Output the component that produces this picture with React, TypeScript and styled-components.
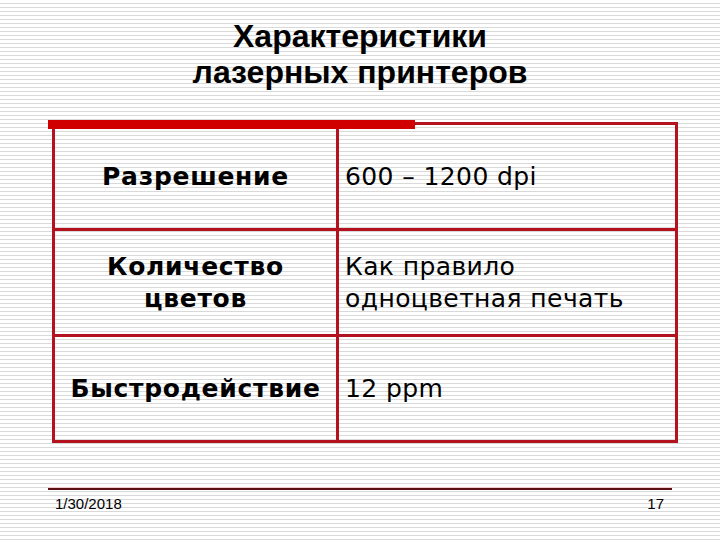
import * as React from "react";
import styled, { createGlobalStyle } from "styled-components";

const colors = {
  border: "#b3121e",
  bar: "#d00000",
  footerLine: "#5a1010",
  text: "#000000"
};

const GlobalStyle = createGlobalStyle`
  html, body {
    margin: 0;
    padding: 0;
  }
  body {
    font-family: "DejaVu Sans", Verdana, sans-serif;
    color: ${colors.text};
  }
`;

const SSlide = styled.div`
  position: relative;
  width: 720px;
  height: 540px;
  overflow: hidden;
  display: flex;
  flex-direction: column;
  background-color: #ffffff;
  background-image: repeating-linear-gradient(
    to bottom,
    #ffffff 0px,
    #ffffff 3px,
    #d9d9d9 3px,
    #d9d9d9 4px
  );
`;

const STitle = styled.h1`
  margin: 18px 0 0;
  font-family: "Liberation Sans", Arial, sans-serif;
  font-weight: 700;
  font-size: 32px;
  line-height: 36px;
  text-align: center;
  color: #000;
`;

const STableWrap = styled.div`
  position: relative;
  margin: 32px 0 0 52px;
  width: 626px;
`;

const STopBar = styled.div`
  position: absolute;
  left: -4px;
  top: -2px;
  width: 367px;
  height: 9px;
  background: ${colors.bar};
`;

const STable = styled.table`
  width: 100%;
  border-collapse: collapse;
  table-layout: fixed;
  border: 2px solid ${colors.border};
`;

const SRow = styled.tr`
  height: 106px;
`;

const SLabel = styled.td`
  width: 281px;
  padding: 0;
  border: 3px solid ${colors.border};
  text-align: center;
  vertical-align: middle;
  font-weight: 700;
  font-size: 25px;
  line-height: 32px;
  letter-spacing: 0.7px;
`;

const SValue = styled.td`
  padding: 0 0 0 6px;
  border: 3px solid ${colors.border};
  text-align: left;
  vertical-align: middle;
  font-size: 25px;
  line-height: 32px;
  letter-spacing: 0.4px;
`;

const SFooter = styled.div`
  margin: 45px 48px 0 48px;
  border-top: 2px solid ${colors.footerLine};
  box-shadow: 0 -1px 0 #f4c8c8;
  display: flex;
  justify-content: space-between;
  padding: 6px 8px 0 7px;
  font-family: "Liberation Sans", Arial, sans-serif;
  font-size: 15px;
  line-height: 16px;
`;

const rows = [
  { label: ["Разрешение"], value: ["600 – 1200 dpi"] },
  { label: ["Количество", "цветов"], value: ["Как правило", "одноцветная печать"] },
  { label: ["Быстродействие"], value: ["12 ppm"] }
];

const App = () => (
  <>
    <GlobalStyle />
    <SSlide>
      <STitle>
        Характеристики
        <br />
        лазерных принтеров
      </STitle>
      <STableWrap>
        <STopBar />
        <STable>
          <tbody>
            {rows.map((row, i) => (
              <SRow key={i}>
                <SLabel>
                  {row.label.map((line, j) => (
                    <div key={j}>{line}</div>
                  ))}
                </SLabel>
                <SValue>
                  {row.value.map((line, j) => (
                    <div key={j}>{line}</div>
                  ))}
                </SValue>
              </SRow>
            ))}
          </tbody>
        </STable>
      </STableWrap>
      <SFooter>
        <span>1/30/2018</span>
        <span>17</span>
      </SFooter>
    </SSlide>
  </>
);

export default App;
